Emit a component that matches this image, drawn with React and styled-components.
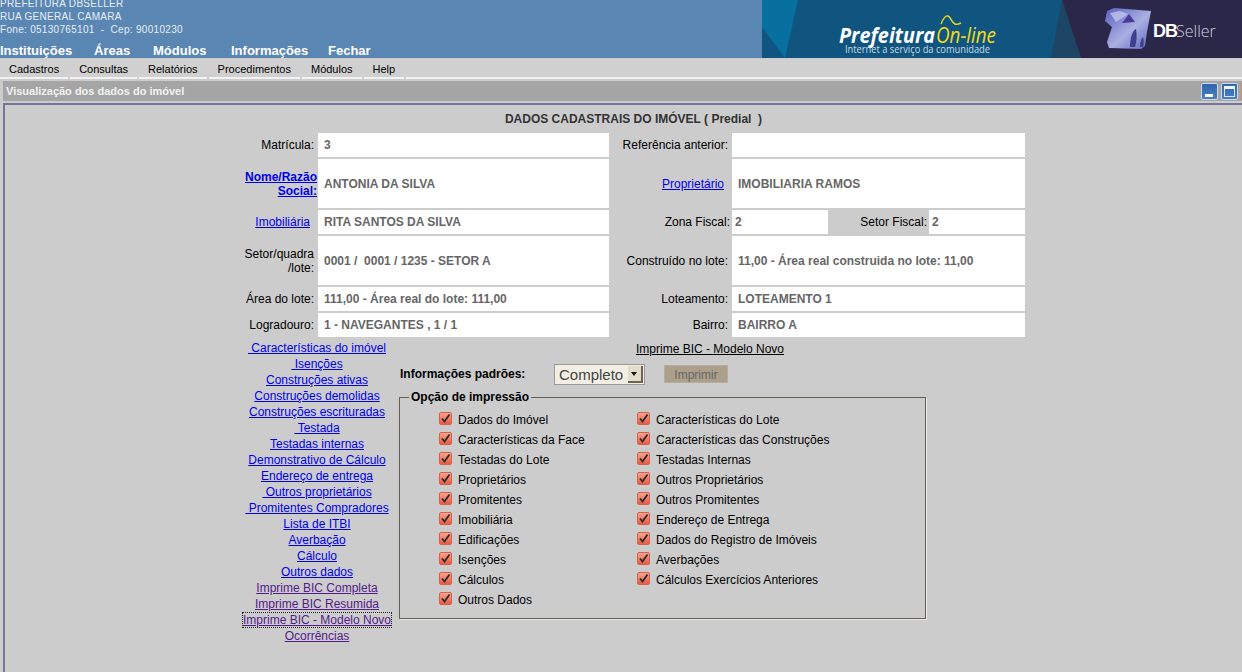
import React from 'react'
import styled, { createGlobalStyle } from 'styled-components'

const GlobalStyle = createGlobalStyle`
  html, body {
    margin: 0;
    padding: 0;
    height: 100%;
    overflow: hidden;
    background: #cccccc;
    font-family: "Liberation Sans", Arial, sans-serif;
  }
`

const menus = ['Cadastros', 'Consultas', 'Relatórios', 'Procedimentos', 'Módulos', 'Help']

const sideLinks = [
  ['\u00a0Características do imóvel'],
  ['\u00a0Isenções'],
  ['Construções ativas'],
  ['Construções demolidas'],
  ['Construções escrituradas'],
  ['\u00a0Testada'],
  ['Testadas internas'],
  ['Demonstrativo de Cálculo'],
  ['Endereço de entrega'],
  ['\u00a0Outros proprietários'],
  ['\u00a0Promitentes Compradores'],
  ['Lista de ITBI'],
  ['Averbação'],
  ['Cálculo'],
  ['Outros dados'],
  ['Imprime BIC Completa', 'visited'],
  ['Imprime BIC Resumida', 'visited'],
  ['Imprime BIC - Modelo Novo', 'focus'],
  ['Ocorrências', 'visited'],
]

const optionsLeft = ['Dados do Imóvel', 'Características da Face', 'Testadas do Lote', 'Proprietários', 'Promitentes', 'Imobiliária', 'Edificações', 'Isenções', 'Cálculos', 'Outros Dados']
const optionsRight = ['Características do Lote', 'Características das Construções', 'Testadas Internas', 'Outros Proprietários', 'Outros Promitentes', 'Endereço de Entrega', 'Dados do Registro de Imóveis', 'Averbações', 'Cálculos Exercícios Anteriores']

const Banner = () => (
  <BannerSvg viewBox="762 0 480 58">
    <defs>
      <linearGradient id="cube" x1="0" y1="0" x2="1" y2="1">
        <stop offset="0" stopColor="#5a5fc0" />
        <stop offset="0.55" stopColor="#a9b0e2" />
        <stop offset="1" stopColor="#5c62bd" />
      </linearGradient>
    </defs>
    <rect x="762" y="0" width="480" height="58" fill="#0f557f" />
    <polygon points="762,0 798,0 785,58 762,27" fill="#07709f" />
    <polygon points="1062,0 1081,58 1051,58" fill="#1d4665" />
    <polygon points="1062,0 1242,0 1242,58 1081,58" fill="#2a2748" />
    <text x="839" y="43" fontFamily="Open Sans" fontWeight="700" fontStyle="italic" fontSize="22" fill="#fff" textLength="96" lengthAdjust="spacingAndGlyphs">Prefeitura</text>
    <text x="936" y="43" fontFamily="Open Sans" fontStyle="italic" fontSize="22" fill="#f2dc1a" textLength="60" lengthAdjust="spacingAndGlyphs">On-line</text>
    <path d="M941 24c2-5 4-9 7-8 3 1 3 6 7 8 2 1 4 0 6-1" fill="none" stroke="#f2dc1a" strokeWidth="1.4" />
    <text x="845" y="53" fontFamily="Open Sans" fontSize="10" fill="#cdd9e2" textLength="145" lengthAdjust="spacingAndGlyphs">Internet a serviço da comunidade</text>
    <path d="M1107 11l7-3 37 3-4 21-2 14-4 3-32-1-2-6 5-15-7-6z" fill="url(#cube)" />
    <path d="M1122 23l7-9 6 8z" fill="#4a3a98" />
    <path d="M1130 47c0-8 2-16 6-18 1 6 1 12-1 18zM1140 47c0-5 1-8 3-10 1 4 1 7 0 10z" fill="#3d3f8f" />
    <path d="M1110 13l10-2 8 3-12 8z" fill="#c9cdf0" opacity="0.7" />
    <text x="1153" y="37" fontFamily="Liberation Sans" fontWeight="700" fontSize="18" letterSpacing="-1" fill="#fff">DB</text>
    <text x="1176" y="37" fontFamily="Open Sans" fontWeight="300" fontSize="16" fill="#cfcfdc">Seller</text>
  </BannerSvg>
)

const CheckItem = ({ children }) => (
  <CheckRow>
    <CheckBox>
      <svg width="11" height="11" viewBox="0 0 11 11">
        <path d="M2 5.5l2.5 3L9.5 1.5" fill="none" stroke="#2b2b2b" strokeWidth="1.8" />
      </svg>
    </CheckBox>
    <span>{children}</span>
  </CheckRow>
)

const App = () => (
  <Page>
    <GlobalStyle />
    <Header>
      <HeaderLeft>
        <Address>
          <div>PREFEITURA DBSELLER</div>
          <div>RUA GENERAL CAMARA</div>
          <div>Fone: 05130765101 &nbsp;-&nbsp; Cep: 90010230</div>
        </Address>
        <TopNav>
          <TopItem $w={94}>Instituições</TopItem>
          <TopItem $w={59}>Áreas</TopItem>
          <TopItem $w={78}>Módulos</TopItem>
          <TopItem $w={97}>Informações</TopItem>
          <TopItem>Fechar</TopItem>
        </TopNav>
      </HeaderLeft>
      <Banner />
    </Header>

    <MenuBar>
      {menus.map((m) => <MenuItem key={m}>{m}</MenuItem>)}
      <MenuRest />
    </MenuBar>

    <TitleBar>
      <TitleText>Visualização dos dados do imóvel</TitleText>
      <WinButtons>
        <WinButton>
          <svg width="17" height="17" viewBox="0 0 17 17"><rect x="4" y="11" width="8" height="3" fill="#fff" /></svg>
        </WinButton>
        <WinButton>
          <svg width="17" height="17" viewBox="0 0 17 17"><rect x="3.5" y="3.5" width="10" height="10" fill="none" stroke="#d6e4f4" /><rect x="3" y="3" width="11" height="3" fill="#eef4fb" /></svg>
        </WinButton>
        <CloseEdge />
      </WinButtons>
    </TitleBar>

    <Content>
      <Heading>DADOS CADASTRAIS DO IMÓVEL ( Predial &nbsp;)</Heading>
      <DataGrid>
        <Label>Matrícula:</Label>
        <Value>3</Value>
        <Label>Referência anterior:</Label>
        <Value />

        <Label $pr={1}><BoldLink href="#">Nome/Razão Social:</BoldLink></Label>
        <Value $tall>ANTONIA DA SILVA</Value>
        <Label $pr={8}><Link href="#">Proprietário</Link></Label>
        <Value $tall>IMOBILIARIA RAMOS</Value>

        <Label $pr={8}><Link href="#">Imobiliária</Link></Label>
        <Value>RITA SANTOS DA SILVA</Value>
        <Label $pr={2}>Zona Fiscal:</Label>
        <SplitCell>
          <Value $pl={3}>2</Value>
          <Label $pr={2}>Setor Fiscal:</Label>
          <Value $pl={3}>2</Value>
        </SplitCell>

        <Label>Setor/quadra<br />/lote:</Label>
        <Value $tall>0001 / &nbsp;0001 / 1235 - SETOR A</Value>
        <Label>Construído no lote:</Label>
        <Value $tall>11,00 - Área real construida no lote: 11,00</Value>

        <Label>Área do lote:</Label>
        <Value>111,00 - Área real do lote: 111,00</Value>
        <Label>Loteamento:</Label>
        <Value>LOTEAMENTO 1</Value>

        <Label>Logradouro:</Label>
        <Value>1 - NAVEGANTES , 1 / 1</Value>
        <Label>Bairro:</Label>
        <Value>BAIRRO A</Value>
      </DataGrid>

      <Lower>
        <SideLinks>
          {sideLinks.map(([text, state]) => (
            <div key={text}><SideLink href="#" $state={state}>{text}</SideLink></div>
          ))}
        </SideLinks>
        <PrintPanel>
          <PrintLink href="#">Imprime BIC - Modelo Novo</PrintLink>
          <PrintRow>
            <PrintLabel>Informações padrões:</PrintLabel>
            <FakeSelect>
              <span>Completo</span>
              <SelectArrow />
            </FakeSelect>
            <PrintButton>Imprimir</PrintButton>
          </PrintRow>
          <Options>
            <OptionsLegend>Opção de impressão</OptionsLegend>
            <OptionsColumns>
              <OptionsColumn>
                {optionsLeft.map((o) => <CheckItem key={o}>{o}</CheckItem>)}
              </OptionsColumn>
              <OptionsColumn>
                {optionsRight.map((o) => <CheckItem key={o}>{o}</CheckItem>)}
              </OptionsColumn>
            </OptionsColumns>
          </Options>
        </PrintPanel>
      </Lower>
    </Content>
  </Page>
)

export default App

const Page = styled.div`
  width: 1242px;
  height: 672px;
  overflow: hidden;
  display: flex;
  flex-direction: column;
  background: #cccccc;
  font-size: 12px;
  color: #000;
`
const Header = styled.div`
  height: 58px;
  flex: none;
  display: flex;
  justify-content: space-between;
  background: #5a86b4;
  color: #fff;
`
const HeaderLeft = styled.div`
  position: relative;
  display: flex;
  flex-direction: column;
  justify-content: space-between;
  height: 58px;
  overflow: hidden;
`
const Address = styled.div`
  margin-top: -3px;
  font-size: 10px;
  line-height: 13px;
  letter-spacing: 0.3px;
  color: #e8eef5;
`
const TopNav = styled.div`
  display: flex;
  font-size: 13px;
  font-weight: bold;
  line-height: 16px;
  margin-bottom: -1px;
`
const TopItem = styled.div`
  width: ${(p) => (p.$w ? p.$w + 'px' : 'auto')};
`
const BannerSvg = styled.svg`
  width: 480px;
  height: 58px;
  flex: none;
`
const MenuBar = styled.div`
  flex: none;
  display: flex;
  height: 20px;
  margin-top: 1px;
  background: #d0d0d0;
  margin-bottom: 2px;
`
const MenuItem = styled.div`
  padding: 0 9px 0 9px;
  margin-right: 2px;
  height: 18px;
  line-height: 21px;
  font-size: 11px;
  border-bottom: 2px solid #f2f2f2;
  &:first-child { padding-left: 9px; }
`
const MenuRest = styled.div`
  flex: 1;
  height: 18px;
  border-bottom: 2px solid #f2f2f2;
`
const TitleBar = styled.div`
  flex: none;
  height: 20px;
  margin-left: 3px;
  padding-left: 3px;
  display: flex;
  justify-content: space-between;
  align-items: center;
  background: #a5a5a5;
`
const TitleText = styled.div`
  font-size: 11px;
  font-weight: bold;
  color: #f2f2f2;
`
const WinButtons = styled.div`
  display: flex;
  gap: 3px;
  align-items: center;
`
const WinButton = styled.div`
  width: 17px;
  height: 17px;
  border: 1px solid #c9d7e8;
  border-radius: 2px;
  box-sizing: border-box;
  background: linear-gradient(180deg, #2f66ad, #4b7fc2);
  display: flex;
  align-items: center;
  justify-content: center;
  svg { flex: none; }
`
const CloseEdge = styled.div`
  width: 1px;
  height: 17px;
  background: #d9826c;
`
const Content = styled.div`
  flex: 1;
  margin: 2px 0 0 3px;
  border-top: 2px solid #75759a;
  border-left: 2px solid #75759a;
  background: #cccccc;
`
const Heading = styled.div`
  margin: 7px 0 0 236px;
  width: 785px;
  height: 21px;
  text-align: center;
  font-weight: bold;
  line-height: 14px;
  color: #333;
`
const DataGrid = styled.div`
  margin-left: 236px;
  width: 785px;
  display: grid;
  grid-template-columns: 77px 291px 123px 293px;
  grid-auto-rows: auto;
  column-gap: 0;
  row-gap: 2px;
  margin-left: 236px;
  margin-top: 0;
`
const Label = styled.div`
  display: flex;
  align-items: center;
  justify-content: flex-end;
  text-align: right;
  padding-right: ${(p) => (p.$pr !== undefined ? p.$pr : 4)}px;
  line-height: 14px;
`
const Value = styled.div`
  height: ${(p) => (p.$tall ? 49 : 24)}px;
  display: flex;
  align-items: center;
  box-sizing: border-box;
  padding-left: ${(p) => (p.$pl !== undefined ? p.$pl : 6)}px;
  margin-right: 0;
  background: #fff;
  color: #666;
  font-weight: bold;
`
const SplitCell = styled.div`
  display: grid;
  grid-template-columns: 96px 101px 96px;
`
const Link = styled.a`
  color: #0000ee;
`
const BoldLink = styled(Link)`
  font-weight: bold;
  display: block;
  width: 76px;
`
const Lower = styled.div`
  display: grid;
  grid-template-columns: 158px 527px;
  margin: 3px 0 0 236px;
`
const SideLinks = styled.div`
  width: 152px;
  text-align: center;
  line-height: 16px;
  white-space: nowrap;
`
const SideLink = styled.a`
  color: ${(p) => (p.$state ? '#551a8b' : '#0000ee')};
  outline: ${(p) => (p.$state === 'focus' ? '1px dotted #222' : 'none')};
  outline-offset: 0;
`
const PrintPanel = styled.div`
  display: flex;
  flex-direction: column;
`
const PrintLink = styled.a`
  color: #000;
  align-self: center;
  line-height: 16px;
  margin: 0 0 0 95px;
  height: 16px;
  margin-top: 1px;
`
const PrintRow = styled.div`
  display: flex;
  align-items: center;
  height: 22px;
  margin-top: 6px;
`
const PrintLabel = styled.div`
  width: 155px;
  padding-left: 1px;
  box-sizing: border-box;
  font-weight: bold;
`
const FakeSelect = styled.div`
  width: 91px;
  height: 21px;
  box-sizing: border-box;
  border: 1px solid #999;
  background: #f3eee3;
  display: flex;
  align-items: center;
  justify-content: space-between;
  padding: 0 1px 0 4px;
  font-size: 15px;
  color: #444;
`
const SelectArrow = styled.div`
  position: relative;
  width: 15px;
  height: 17px;
  background: #e4dccb;
  border-right: 2px solid #6d6350;
  border-bottom: 2px solid #6d6350;
  box-sizing: border-box;
  &::after {
    content: '';
    position: absolute;
    left: 3px;
    top: 6px;
    border: 3px solid transparent;
    border-top: 4px solid #111;
    border-bottom: none;
  }
`
const PrintButton = styled.div`
  width: 64px;
  height: 18px;
  margin-left: 19px;
  background: #aca08c;
  border: 1px solid #b8ad9b;
  box-sizing: border-box;
  color: #666;
  text-align: center;
  line-height: 18px;
`
const Options = styled.fieldset`
  margin: 5px 0 0;
  padding: 0;
  width: 527px;
  height: 229px;
  box-sizing: border-box;
  border: 1px solid #655e52;
  border-right-width: 1px;
  box-shadow: 1px 1px 0 #e8e8e8;
`
const OptionsLegend = styled.legend`
  margin-left: 9px;
  padding: 0 2px;
  font-weight: bold;
  font-size: 12px;
`
const OptionsColumns = styled.div`
  display: flex;
  padding: 6px 0 0 39px;
`
const OptionsColumn = styled.div`
  width: 198px;
  display: flex;
  flex-direction: column;
`
const CheckRow = styled.div`
  height: 20px;
  display: flex;
  align-items: center;
  gap: 6px;
`
const CheckBox = styled.span`
  width: 13px;
  height: 13px;
  margin-top: -4px;
  flex: none;
  display: flex;
  align-items: center;
  justify-content: center;
  box-sizing: border-box;
  border-radius: 2px;
  border: 1px solid #d8604a;
  background: linear-gradient(180deg, #f9a48e, #ea5a42);
  svg { flex: none; }
`
